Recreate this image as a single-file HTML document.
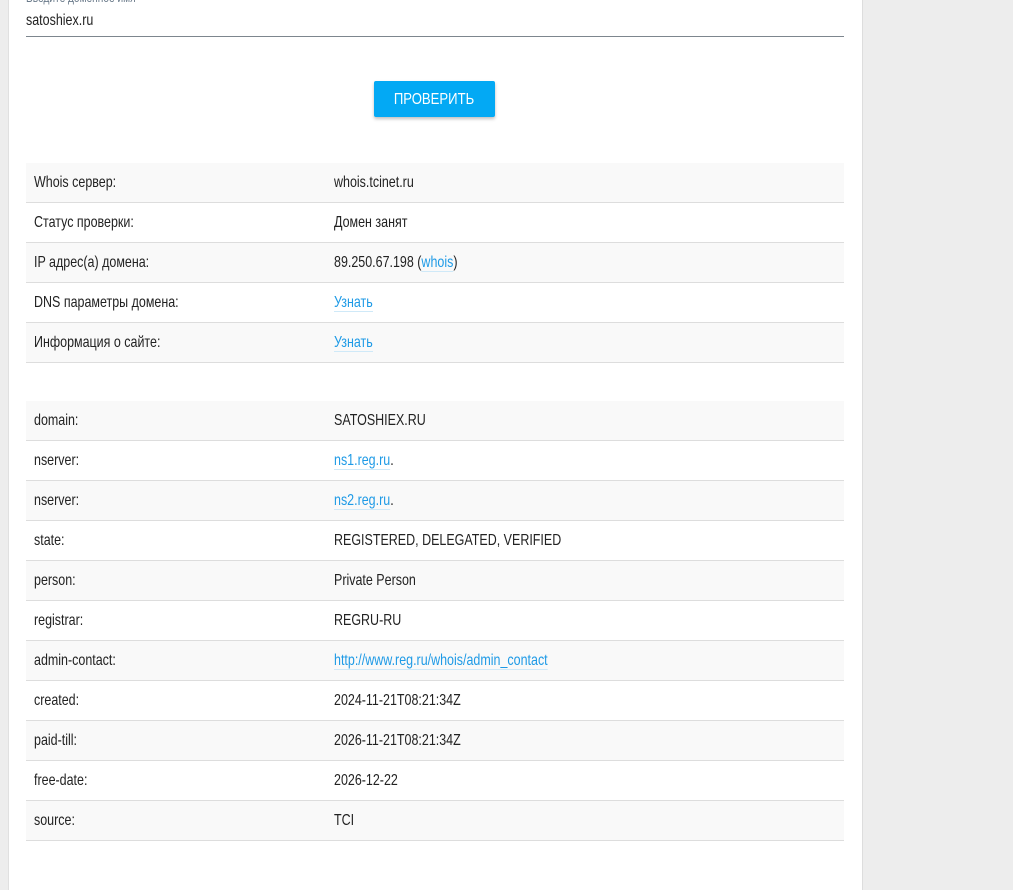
<!DOCTYPE html>
<html><head><meta charset="utf-8"><style>
body{margin:0;width:1013px;height:874px;background:#ededed;font-family:"Liberation Sans",sans-serif;font-size:16px;color:#222;overflow:hidden;position:relative}
.card{position:absolute;left:8px;top:-10px;width:853px;height:900px;background:#fff;border-left:1px solid #e0e0e0;border-right:1px solid #ddd}
.n{display:inline-block;transform:scaleX(.78);transform-origin:0 50%;white-space:nowrap}
.lbl{position:absolute;left:26px;top:-10px;font-size:13px;color:#6a7a8a}
.inp{position:absolute;left:26px;top:12px;width:818px;height:24px;border-bottom:1px solid #7d868e;font-size:16px}
.btn{position:absolute;left:374px;top:81px;width:121px;height:36px;background:#03a9f4;color:#fff;text-align:center;line-height:37px;font-size:16px;border-radius:2px;box-shadow:0 2px 3px rgba(0,0,0,.25)}
.btn span{display:inline-block;transform:scaleX(.82)}
table{position:absolute;left:26px;width:818px;border-collapse:collapse}
td{height:38px;padding:1px 0 0 8px;border-bottom:1px solid #ddd;vertical-align:middle;line-height:20px}
td:first-child{width:292px}
tr:nth-child(odd){background:#f9f9f9}
a{color:#1e9ae6;text-decoration:none;border-bottom:1px solid #cfe9f8}
</style></head><body>
<div class="card"></div>
<div class="lbl"><span class="n">Введите доменное имя</span></div>
<div class="inp"><span class="n">satoshiex.ru</span></div>
<div class="btn"><span>ПРОВЕРИТЬ</span></div>
<table style="top:163px">
<tr><td><span class="n">Whois сервер:</span></td><td><span class="n">whois.tcinet.ru</span></td></tr>
<tr><td><span class="n">Статус проверки:</span></td><td><span class="n">Домен занят</span></td></tr>
<tr><td><span class="n">IP адрес(а) домена:</span></td><td><span class="n">89.250.67.198 (<a>whois</a>)</span></td></tr>
<tr><td><span class="n">DNS параметры домена:</span></td><td><span class="n"><a>Узнать</a></span></td></tr>
<tr><td><span class="n">Информация о сайте:</span></td><td><span class="n"><a>Узнать</a></span></td></tr>
</table>
<table style="top:401px">
<tr><td><span class="n">domain:</span></td><td><span class="n">SATOSHIEX.RU</span></td></tr>
<tr><td><span class="n">nserver:</span></td><td><span class="n"><a>ns1.reg.ru</a>.</span></td></tr>
<tr><td><span class="n">nserver:</span></td><td><span class="n"><a>ns2.reg.ru</a>.</span></td></tr>
<tr><td><span class="n">state:</span></td><td><span class="n">REGISTERED, DELEGATED, VERIFIED</span></td></tr>
<tr><td><span class="n">person:</span></td><td><span class="n">Private Person</span></td></tr>
<tr><td><span class="n">registrar:</span></td><td><span class="n">REGRU-RU</span></td></tr>
<tr><td><span class="n">admin-contact:</span></td><td><span class="n"><a>http://www.reg.ru/whois/admin_contact</a></span></td></tr>
<tr><td><span class="n">created:</span></td><td><span class="n">2024-11-21T08:21:34Z</span></td></tr>
<tr><td><span class="n">paid-till:</span></td><td><span class="n">2026-11-21T08:21:34Z</span></td></tr>
<tr><td><span class="n">free-date:</span></td><td><span class="n">2026-12-22</span></td></tr>
<tr><td><span class="n">source:</span></td><td><span class="n">TCI</span></td></tr>
</table>
</body></html>
